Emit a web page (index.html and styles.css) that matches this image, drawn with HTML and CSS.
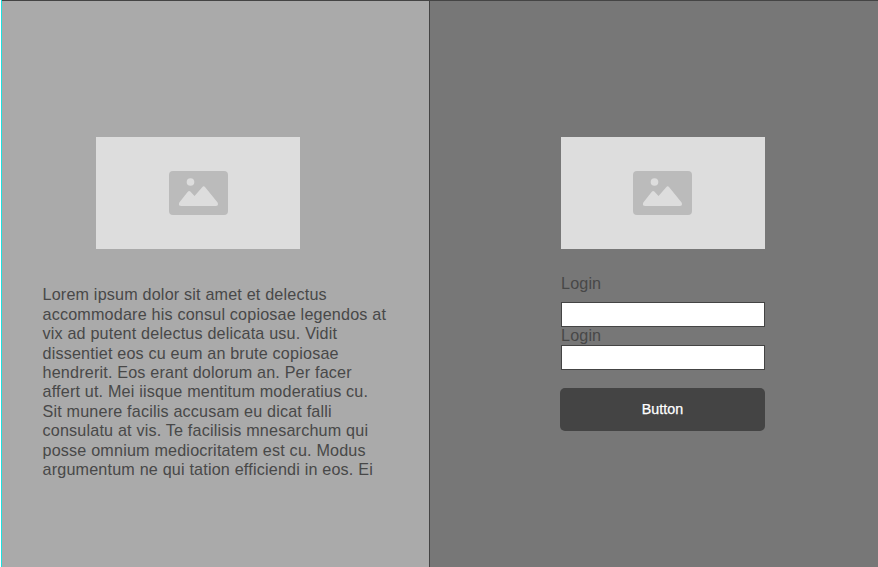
FILE: index.html
```html
<!DOCTYPE html>
<html lang="en">
<head>
<meta charset="utf-8">
<title>Login</title>
<link rel="stylesheet" href="styles.css">
</head>
<body>
<main class="page">
<section class="intro">
<div class="picture">
<svg width="59" height="44" viewBox="0 0 59 44"><rect width="59" height="44" rx="4" fill="#bbb"/><circle cx="21.5" cy="11" r="3.8" fill="#ddd"/><path d="M10.300 31.500 18.800 20.800Q20.200 19 21.600 20.800L25.500 25 33.200 16.200Q34.700 14.300 36.200 16.200L48.600 31.500Q50 35 46.500 35H12.500Q8.800 35 10.300 31.500Z" fill="#ddd"/></svg>
</div>
<p class="copy">Lorem ipsum dolor sit amet et delectus<br>accommodare his consul copiosae legendos at<br>vix ad putent delectus delicata usu. Vidit<br>dissentiet eos cu eum an brute copiosae<br>hendrerit. Eos erant dolorum an. Per facer<br>affert ut. Mei iisque mentitum moderatius cu.<br>Sit munere facilis accusam eu dicat falli<br>consulatu at vis. Te facilisis mnesarchum qui<br>posse omnium mediocritatem est cu. Modus<br>argumentum ne qui tation efficiendi in eos. Ei</p>
</section>
<section class="signin">
<div class="picture">
<svg width="59" height="44" viewBox="0 0 59 44"><rect width="59" height="44" rx="4" fill="#bbb"/><circle cx="21.5" cy="11" r="3.8" fill="#ddd"/><path d="M10.300 31.500 18.800 20.800Q20.200 19 21.600 20.800L25.500 25 33.200 16.200Q34.700 14.300 36.200 16.200L48.600 31.500Q50 35 46.500 35H12.500Q8.800 35 10.300 31.500Z" fill="#ddd"/></svg>
</div>
<form class="form">
<label class="label" for="user">Login</label>
<input class="field" id="user" type="text">
<label class="label label-second" for="pass">Login</label>
<input class="field" id="pass" type="password">
<button class="button" type="button">Button</button>
</form>
</section>
</main>
</body>
</html>
```
FILE: styles.css
```css
* { box-sizing: border-box; }
body { margin: 0; background: #fff; color: #484848; font-family: "Liberation Sans", Arial, sans-serif; font-size: 16.17px; overflow: hidden; }
.page { display: grid; grid-template-columns: 427px 449px; height: 567px; margin-left: 1px; border-left: 1px solid #1de0e0; }
.intro, .signin { border-top: 1px solid #444; padding-top: 136px; }
.intro { background: #aaa; padding-left: 94px; }
.signin { background: #777; border-left: 1px solid #444; padding-left: 131px; }
.picture { display: flex; align-items: center; justify-content: center; width: 204px; height: 112px; background: #ddd; }
.picture svg { display: block; }
.signin .picture { padding-right: 1px; }
.copy { margin: 36.4px 0 0 -53.5px; width: 380px; line-height: 19.4px; letter-spacing: .18px; }
.form { display: flex; flex-direction: column; width: 204px; margin: 25px 0 0; }
.label { line-height: 19px; letter-spacing: .14px; }
.field { height: 25px; margin: 9px 0 0; padding: 0 4px; border: 1px solid #444; background: #fff; }
.label-second { height: 18px; line-height: 17px; }
.label-second + .field { margin-top: 0; }
.button { width: 205px; height: 43px; margin: 18px 0 0 -1px; padding: 0 0 2px; border: 0; border-radius: 5px; background: #444; color: #fff; font: 14.3px "Liberation Sans", Arial, sans-serif; -webkit-text-stroke: .25px #fff; }
```
